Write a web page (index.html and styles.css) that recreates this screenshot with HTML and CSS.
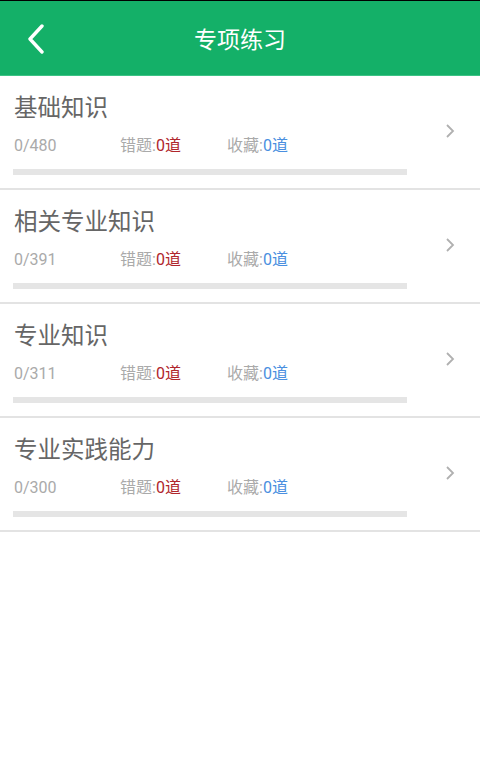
FILE: index.html
```html
<!DOCTYPE html>
<html lang="zh-CN">
<head>
<meta charset="utf-8">
<title>专项练习</title>
<link rel="stylesheet" href="styles.css">
</head>
<body>
<div class="topline"></div>
<header class="header">
  <div class="back">
    <svg width="18" height="30" viewBox="0 0 18 30"><path d="M15 2 L3 15 L15 28" fill="none" stroke="#fff" stroke-width="3.4" stroke-linecap="round" stroke-linejoin="round"/></svg>
  </div>
  <h1 class="title">专项练习</h1>
</header>
<main class="list">
  <div class="row">
    <div class="main">
      <div class="name">基础知识</div>
      <div class="stats"><span class="count">0/480</span><span class="wrong">错题:<em class="red">0道</em></span><span class="fav">收藏:<em class="blue">0道</em></span></div>
      <div class="bar"></div>
    </div>
    <div class="chev"><svg width="10" height="16" viewBox="0 0 10 16"><path d="M2 2 L8 8 L2 14" fill="none" stroke="#b0b0b0" stroke-width="1.8"/></svg></div>
  </div>
  <div class="row">
    <div class="main">
      <div class="name">相关专业知识</div>
      <div class="stats"><span class="count">0/391</span><span class="wrong">错题:<em class="red">0道</em></span><span class="fav">收藏:<em class="blue">0道</em></span></div>
      <div class="bar"></div>
    </div>
    <div class="chev"><svg width="10" height="16" viewBox="0 0 10 16"><path d="M2 2 L8 8 L2 14" fill="none" stroke="#b0b0b0" stroke-width="1.8"/></svg></div>
  </div>
  <div class="row">
    <div class="main">
      <div class="name">专业知识</div>
      <div class="stats"><span class="count">0/311</span><span class="wrong">错题:<em class="red">0道</em></span><span class="fav">收藏:<em class="blue">0道</em></span></div>
      <div class="bar"></div>
    </div>
    <div class="chev"><svg width="10" height="16" viewBox="0 0 10 16"><path d="M2 2 L8 8 L2 14" fill="none" stroke="#b0b0b0" stroke-width="1.8"/></svg></div>
  </div>
  <div class="row">
    <div class="main">
      <div class="name">专业实践能力</div>
      <div class="stats"><span class="count">0/300</span><span class="wrong">错题:<em class="red">0道</em></span><span class="fav">收藏:<em class="blue">0道</em></span></div>
      <div class="bar"></div>
    </div>
    <div class="chev"><svg width="10" height="16" viewBox="0 0 10 16"><path d="M2 2 L8 8 L2 14" fill="none" stroke="#b0b0b0" stroke-width="1.8"/></svg></div>
  </div>
</main>
</body>
</html>
```
FILE: styles.css
```css
html, body {
  margin: 0;
  padding: 0;
  background: #ffffff;
  font-family: Roboto, "Noto Sans CJK SC", sans-serif;
}
.topline {
  height: 1px;
  background: #000;
}
.header {
  height: 74px;
  background: #14b068;
  border-bottom: 1px solid #3cc385;
  display: flex;
  align-items: center;
  justify-content: center;
  position: relative;
}
.back {
  position: absolute;
  left: 27px;
  top: 23px;
  width: 18px;
  height: 30px;
}
.title {
  margin: 0;
  color: #fff;
  font-size: 23px;
  font-weight: 400;
  font-family: "Noto Sans CJK SC", sans-serif;
}
.row {
  display: flex;
  align-items: flex-start;
  height: 112px;
  border-bottom: 2px solid #e3e3e3;
}
.main {
  flex: 1;
  padding-left: 13px;
}
.name {
  padding-top: 15px;
  padding-left: 1px;
  font-size: 23.5px;
  line-height: 30px;
  color: #666;
  font-family: "Noto Sans CJK SC", sans-serif;
}
.stats {
  margin-top: 14px;
  padding-left: 1px;
  font-size: 16px;
  line-height: 22px;
  color: #aaa;
  display: grid;
  grid-template-columns: 106px 107px auto;
}
.stats em { font-style: normal; }
.red { color: #b0262c; }
.blue { color: #4a8fe0; }
.bar {
  margin-top: 12px;
  width: 394px;
  height: 6px;
  background: #e5e5e5;
}
.chev {
  width: 10px;
  height: 16px;
  margin-right: 25px;
  margin-top: 47px;
}
.chev svg { display: block; }
```
